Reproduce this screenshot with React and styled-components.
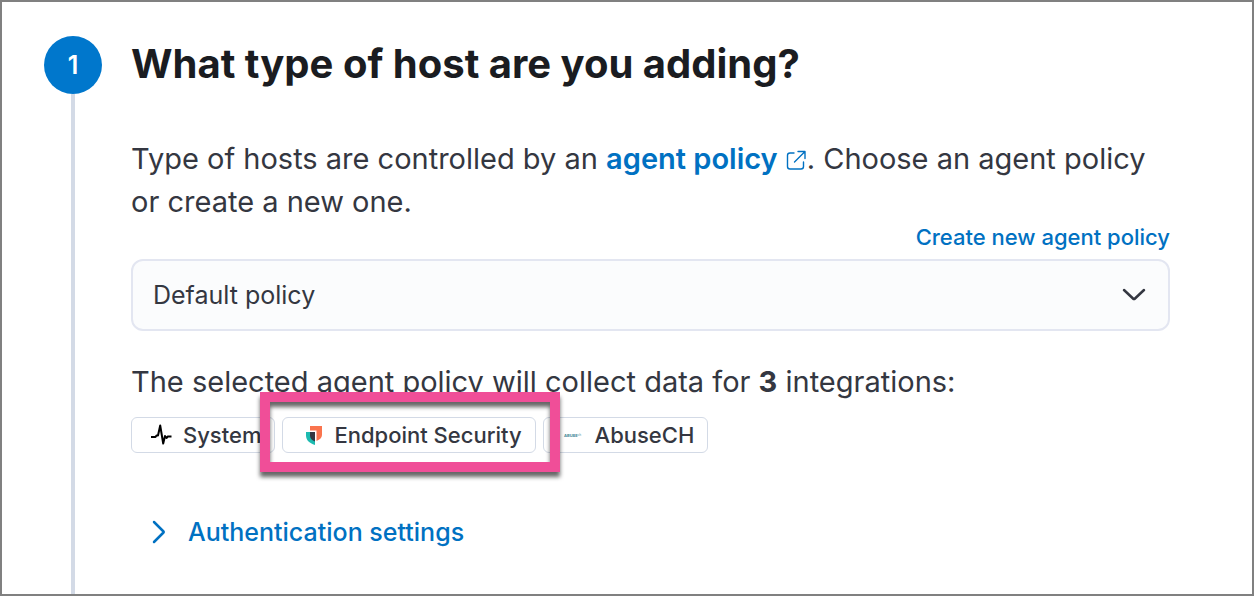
import React from "react";
import styled, { createGlobalStyle } from "styled-components";

const GlobalStyle = createGlobalStyle`
  *, *::before, *::after { box-sizing: border-box; }
  body {
    margin: 0;
    background: #fff;
    color: #343741;
    font-family: Inter, "Liberation Sans", sans-serif;
  }
`;

const Page = styled.main`
  display: flex;
  min-height: 100vh;
  padding: 34px 82px 0 42px;
  border: 2px solid #808080;
`;

const Step = styled.section`
  display: flex;
  flex: 1;
  gap: 29px;
  min-width: 0;
`;

const Rail = styled.div`
  display: flex;
  flex-direction: column;
  align-items: center;
  flex: none;
`;

const StepNumber = styled.span`
  display: flex;
  align-items: center;
  justify-content: center;
  width: 58px;
  height: 58px;
  border-radius: 50%;
  background: #0077cc;
  color: #fff;
  font-size: 25px;
  font-weight: 600;
`;

const RailLine = styled.span`
  flex: 1;
  width: 4px;
  background: #d3dae6;
`;

const Content = styled.div`
  flex: 1;
  min-width: 0;
  padding-bottom: 32px;
`;

const Title = styled.h1`
  margin: 0;
  color: #1a1c21;
  font-size: 40px;
  font-weight: 700;
  line-height: 56px;
`;

const Text = styled.p`
  margin: ${({ $top }) => $top}px 0 0;
  font-size: 29px;
  line-height: 43px;
`;

const Link = styled.a`
  color: #0071c2;
  font-size: ${({ $size }) => $size};
  font-weight: ${({ $weight }) => $weight || 500};
  text-decoration: none;
`;

const ExternalIcon = styled.svg`
  width: 22px;
  height: 22px;
  margin-left: 7px;
  vertical-align: -2px;
`;

const LabelRow = styled.div`
  display: flex;
  justify-content: flex-end;
  line-height: 28px;
`;

const SelectWrap = styled.div`
  display: grid;
  align-items: center;
  margin-top: 8px;
`;

const Select = styled.select`
  grid-area: 1 / 1;
  width: 100%;
  height: 72px;
  padding: 0 72px 0 20px;
  border: 2px solid #e3e6f1;
  border-radius: 12px;
  background: #fbfcfd;
  color: #343741;
  font-family: inherit;
  font-size: 25px;
  appearance: none;
`;

const SelectArrow = styled.svg`
  grid-area: 1 / 1;
  justify-self: end;
  width: 26px;
  height: 16px;
  margin-right: 23px;
  pointer-events: none;
`;

const Badges = styled.ul`
  display: flex;
  gap: 7px;
  margin: 14px 0 0;
  padding: 0;
  list-style: none;
`;

const Badge = styled.li`
  position: relative;
  display: flex;
  align-items: center;
  gap: 11px;
  height: 36px;
  padding: 0 13px 0 18px;
  border: 1px solid #d3dae6;
  border-radius: 6px;
  font-size: 22px;
  font-weight: 500;
  white-space: nowrap;
`;

const BadgeIcon = styled.svg`
  flex: none;
  width: 22px;
  height: 22px;
`;

const Highlight = styled.span`
  position: absolute;
  z-index: 1;
  inset: -26px -25px -20px -23px;
  border: 10px solid #f04e98;
  filter: drop-shadow(0 5px 2px rgba(0, 0, 0, 0.6));
  pointer-events: none;
`;

const Accordion = styled.button`
  display: flex;
  align-items: center;
  gap: 21px;
  margin: 60px 0 0;
  padding: 0 0 0 20px;
  border: 0;
  background: none;
  color: #0071c2;
  font-family: inherit;
  font-size: 25px;
  font-weight: 500;
  line-height: 38px;
`;

const AccordionArrow = styled.svg`
  width: 16px;
  height: 24px;
`;

function SystemIcon() {
  return (
    <BadgeIcon viewBox="0 0 22 22" fill="none" stroke="#000" strokeWidth="2" strokeLinejoin="round" aria-hidden="true">
      <path d="M1 13H5.500L6.500 11.500H8L10.200 1.500L13.200 19.500L15 12L16.500 14L17.800 12.500H21.500" />
    </BadgeIcon>
  );
}

function EndpointIcon() {
  return (
    <BadgeIcon viewBox="0 0 22 22" aria-hidden="true">
      <path fill="#fa744e" d="M9 2H21V11C21 13.500 19 15.500 15.500 17V6.500H9Z" />
      <path fill="#1dbab0" d="M5 8H14V21C8 19 5 16 5 11.500Z" />
      <path fill="#343741" d="M9 8H14V17.500C11 16.500 9 14.500 9 11.500Z" />
    </BadgeIcon>
  );
}

function AbuseIcon() {
  return (
    <BadgeIcon viewBox="0 0 22 22" aria-hidden="true">
      <text x="2" y="13" fill="#3d8494" fontSize="4" fontWeight="700">
        ABUSE<tspan fill="#8fb9c2" fontSize="3" dy="-1">ch</tspan>
      </text>
    </BadgeIcon>
  );
}

export default function App() {
  return (
    <>
      <GlobalStyle />
      <Page>
        <Step>
          <Rail>
            <StepNumber>1</StepNumber>
            <RailLine />
          </Rail>
          <Content>
            <Title>What type of host are you adding?</Title>
            <Text $top={45}>
              Type of hosts are controlled by an{" "}
              <Link href="#agent-policy" $size="inherit" $weight={600}>
                agent policy
                <ExternalIcon viewBox="0 0 22 22" fill="none" stroke="#0071c2" strokeWidth="1.4" strokeLinecap="round" strokeLinejoin="round" aria-hidden="true">
                  <path d="M9 4H5a2.500 2.500 0 0 0-2.500 2.500V17.500A2.500 2.500 0 0 0 5 20H16a2.500 2.500 0 0 0 2.500-2.500V13M13 2.500H20V9.500M20 2.500L9.500 13" />
                </ExternalIcon>
              </Link>
              . Choose an agent policy or create a new one.
            </Text>
            <LabelRow>
              <Link href="#create-policy" $size="22px">Create new agent policy</Link>
            </LabelRow>
            <SelectWrap>
              <Select aria-label="Agent policy" defaultValue="default">
                <option value="default">Default policy</option>
              </Select>
              <SelectArrow viewBox="0 0 26 16" fill="none" stroke="#343741" strokeWidth="2.500" strokeLinecap="round" strokeLinejoin="round" aria-hidden="true">
                <path d="M3 3L12 11.500Q13 12.500 14 11.500L23 3" />
              </SelectArrow>
            </SelectWrap>
            <Text $top={29}>
              The selected agent policy will collect data for <b>3</b> integrations:
            </Text>
            <Badges>
              <Badge><SystemIcon />System</Badge>
              <Badge><EndpointIcon />Endpoint Security<Highlight /></Badge>
              <Badge><AbuseIcon />AbuseCH</Badge>
            </Badges>
            <Accordion type="button" aria-expanded="false">
              <AccordionArrow viewBox="0 0 16 24" fill="none" stroke="#0071c2" strokeWidth="2.500" strokeLinecap="round" strokeLinejoin="round" aria-hidden="true">
                <path d="M3 2L12.500 11.500Q13 12 12.500 12.500L3 22" />
              </AccordionArrow>
              Authentication settings
            </Accordion>
          </Content>
        </Step>
      </Page>
    </>
  );
}
